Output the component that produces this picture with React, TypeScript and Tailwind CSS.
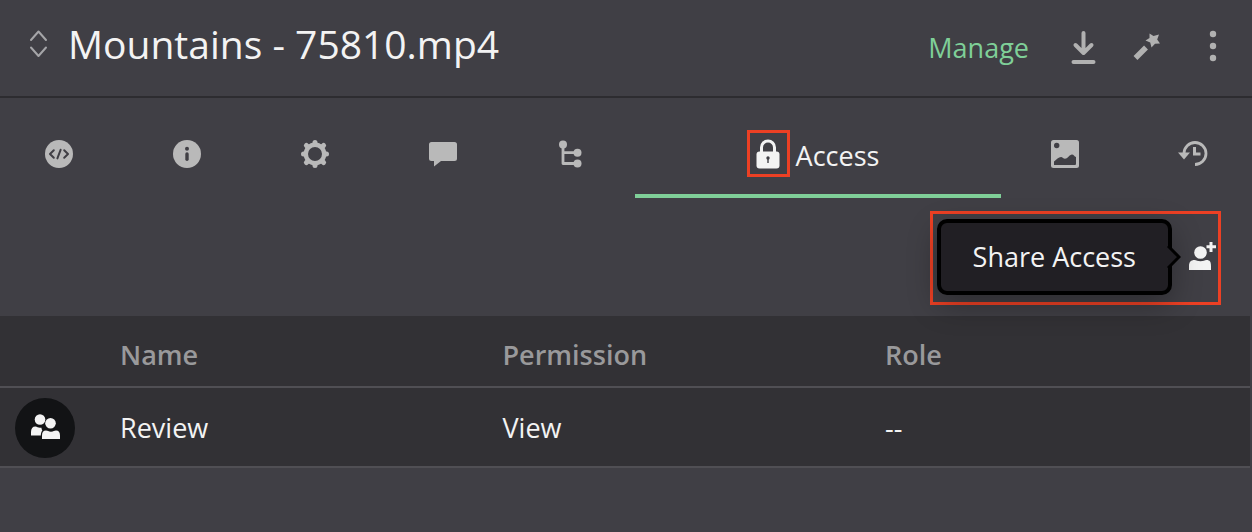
import type { ReactNode } from "react";

type TabItem = {
  id: string;
  label: string;
  icon: ReactNode;
};

const tabs: TabItem[] = [
  {
    id: "metadata",
    label: "Metadata",
    icon: (
      <svg width="28" height="28" viewBox="0 0 28 28" fill="none" aria-hidden="true">
        <circle cx="14" cy="14" r="14" fill="#b9b9b9" />
        <path d="M8.8 10.2 5 14l3.8 3.8M19.2 10.2 23 14l-3.8 3.8M15.6 9.8l-3.2 8.6" stroke="#403f45" strokeWidth="2" strokeLinecap="round" strokeLinejoin="round" />
      </svg>
    ),
  },
  {
    id: "info",
    label: "Info",
    icon: (
      <svg width="28" height="28" viewBox="0 0 28 28" fill="none" aria-hidden="true">
        <circle cx="14" cy="14" r="14" fill="#b9b9b9" />
        <circle cx="14" cy="8.8" r="2" fill="#403f45" />
        <path d="M14 14v5.2" stroke="#403f45" strokeWidth="3.4" strokeLinecap="round" />
      </svg>
    ),
  },
  {
    id: "settings",
    label: "Settings",
    icon: (
      <svg width="28" height="28" viewBox="0 0 28 28" fill="none" stroke="#b9b9b9" aria-hidden="true">
        <circle cx="14" cy="14" r="9.2" strokeWidth="4.4" />
        <path d="M14 2.500v2M14 23.500v2M2.500 14h2M23.500 14h2M5.400 5.400l1.400 1.400M21.200 21.200l1.400 1.400M5.400 22.600l1.400-1.400M21.200 6.800l1.400-1.400" strokeWidth="5" strokeLinecap="round" />
      </svg>
    ),
  },
  {
    id: "comments",
    label: "Comments",
    icon: (
      <svg width="28" height="28" viewBox="0 0 28 28" fill="#b9b9b9" aria-hidden="true">
        <path d="M2.5 2h23A2.5 2.5 0 0 1 28 4.500v14a2.500 2.500 0 0 1-2.500 2.500H12l-7 5.500V21H2.500A2.500 2.500 0 0 1 0 18.500v-14A2.500 2.500 0 0 1 2.500 2Z" />
      </svg>
    ),
  },
  {
    id: "relations",
    label: "Relations",
    icon: (
      <svg width="28" height="28" viewBox="0 0 28 28" fill="#b9b9b9" aria-hidden="true">
        <path d="M6 4v19.500h15M6 12.700h15" fill="none" stroke="#b9b9b9" strokeWidth="2.800" strokeLinejoin="round" />
        <circle cx="6" cy="4.500" r="4" />
        <circle cx="20.500" cy="12.700" r="4" />
        <circle cx="20.500" cy="23.500" r="4" />
      </svg>
    ),
  },
  {
    id: "access",
    label: "Access",
    icon: (
      <svg width="24" height="30" viewBox="0 0 24 30" fill="none" aria-hidden="true">
        <path d="M5.500 14V8.500a6.500 6.500 0 0 1 13 0V14" stroke="#f3f3f3" strokeWidth="3" />
        <rect x="0.500" y="12.500" width="23" height="17" rx="3" fill="#f3f3f3" />
        <circle cx="12" cy="19" r="1.700" fill="#403f45" />
        <path d="M12 19v5" stroke="#403f45" strokeWidth="1.400" />
      </svg>
    ),
  },
  {
    id: "thumbnail",
    label: "Thumbnail",
    icon: (
      <svg width="28" height="28" viewBox="0 0 28 28" fill="#b9b9b9" aria-hidden="true">
        <rect width="28" height="28" rx="2.500" />
        <circle cx="5.700" cy="5.500" r="2.700" fill="#403f45" />
        <path d="M3 25v-3.500c2.500-2 4.500-4.500 7-4.500 1.500 0 2.500 1.800 4 1.800 2.500 0 4.500-4.300 7-4.300 1.700 0 2.300 2 4 2.500v6.500c0 1-.5 1.500-1.500 1.500Z" fill="#403f45" />
      </svg>
    ),
  },
  {
    id: "history",
    label: "History",
    icon: (
      <svg width="30" height="28" viewBox="0 0 30 28" fill="none" aria-hidden="true">
        <path d="M6 13.500a11 11 0 1 1 11 11" stroke="#b9b9b9" strokeWidth="2.800" />
        <path d="M0 12.500h12L6 19.500Z" fill="#b9b9b9" />
        <path d="M16.500 7v7h6" stroke="#b9b9b9" strokeWidth="3" />
      </svg>
    ),
  },
];

const members = [{ name: "Review", permission: "View", role: "--" }];

const columns = [
  { label: "Name", width: "w-[30.6%]" },
  { label: "Permission", width: "w-[30.6%]" },
  { label: "Role", width: "w-auto" },
];

function Header() {
  return (
    <header className="flex h-[98px] items-center border-b-2 border-[#2d2c30] pr-[35px] pl-7">
      <button type="button" aria-label="Switch asset" className="mr-5 -mt-2">
        <svg width="20" height="30" viewBox="0 0 20 30" fill="none" stroke="#a5a5a8" strokeWidth="2" strokeLinecap="round" strokeLinejoin="round" aria-hidden="true">
          <path d="M3 11l7.500-8.500L18 11M3 18.500l7.500 8.500 7.500-8.500" />
        </svg>
      </button>
      <h1 className="min-w-0 flex-1 truncate pb-2 text-[39px] leading-[56px]">
        Mountains - 75810.mp4
      </h1>
      <div className="flex shrink-0 items-center pb-1">
        <a href="#manage" className="pt-1 text-[27px] leading-10 text-[#7fcf98]">
          Manage
        </a>
        <button type="button" aria-label="Download" className="ml-10">
          <svg width="28" height="36" viewBox="0 0 28 36" fill="none" stroke="#b1b1b1" strokeWidth="4" strokeLinecap="round" strokeLinejoin="round" aria-hidden="true">
            <path d="M14.500 5v19M6.500 17l8 8 8-8M4.500 34h20" />
          </svg>
        </button>
        <button type="button" aria-label="Enhance" className="ml-9">
          <svg width="28" height="28" viewBox="0 0 28 28" fill="#b1b1b1" aria-hidden="true">
            <path d="M2.500 26 13 15.500" stroke="#b1b1b1" strokeWidth="5.500" />
            <path d="M16.500 1.500 20.500 4l5.500-1.500-1.800 5L27 11.500l-5 .3L18.500 15.500l-1.300-5L12.500 8.500l4-2.500Z" />
          </svg>
        </button>
        <button type="button" aria-label="More options" className="ml-12">
          <svg width="8" height="32" viewBox="0 0 8 32" fill="#b1b1b1" aria-hidden="true">
            <circle cx="4" cy="4" r="3.200" />
            <circle cx="4" cy="16" r="3.200" />
            <circle cx="4" cy="28" r="3.200" />
          </svg>
        </button>
      </div>
    </header>
  );
}

function Tabs({ active }: { active: string }) {
  return (
    <nav className="-mx-[5px] flex h-[100px]" role="tablist">
      {tabs.map((tab) =>
        tab.id === active ? (
          <button
            key={tab.id}
            type="button"
            role="tab"
            aria-selected="true"
            className="flex w-[29%] items-center justify-center gap-[6px] border-b-4 border-[#7fcf98] pt-[15px] pr-[10px]"
          >
            <span className="flex h-[47px] w-[43px] items-center justify-center border-[3px] border-[#ec4024]">
              {tab.icon}
            </span>
            <span className="pt-1 text-[27px] leading-10">{tab.label}</span>
          </button>
        ) : (
          <button
            key={tab.id}
            type="button"
            role="tab"
            aria-selected="false"
            aria-label={tab.label}
            className="flex flex-1 items-center justify-center border-b-4 border-transparent pt-[15px]"
          >
            {tab.icon}
          </button>
        )
      )}
    </nav>
  );
}

function ShareBar() {
  return (
    <div className="flex justify-end pt-[13px] pr-[31px] pb-[11px]">
      <div className="flex items-center border-[3px] border-[#ec4024] pt-[5px] pr-[2px] pb-[7px] pl-1">
        <div
          role="tooltip"
          id="share-tip"
          className="relative mr-4 rounded-[10px] border-4 border-black bg-[#211f24] px-8 py-[14px] text-[27px] leading-10 shadow-[0_10px_30px_rgba(0,0,0,0.3)]"
        >
          Share Access
          <svg className="absolute top-1/2 -right-[13px] -translate-y-1/2" width="14" height="24" viewBox="0 0 14 24" fill="none" aria-hidden="true">
            <path d="M0 1v22h1L12 12 1 1Z" fill="#211f24" />
            <path d="M1 1l11 11L1 23" stroke="#000" strokeWidth="3" />
          </svg>
        </div>
        <button type="button" aria-label="Share Access" aria-describedby="share-tip">
          <svg width="28" height="30" viewBox="0 0 28 30" fill="#f3f3f3" aria-hidden="true">
            <circle cx="12.500" cy="10.500" r="6.300" />
            <path d="M1 28v-4c0-4 2-6 5.500-6 2 0 3 1.300 6 1.300s4-1.300 6-1.300c3.500 0 4.500 2 4.500 6v4Z" />
            <path d="M23 0v10M18.500 4.700h9.500" stroke="#f3f3f3" strokeWidth="3" />
          </svg>
        </button>
      </div>
    </div>
  );
}

function GroupAvatar() {
  return (
    <span className="flex size-[60px] items-center justify-center rounded-full bg-[#121315]">
      <svg width="30" height="28" viewBox="0 0 30 28" fill="#f3f3f3" aria-hidden="true">
        <circle cx="10" cy="5.500" r="5.300" />
        <circle cx="20.500" cy="9.300" r="5.300" />
        <path d="M1 21.500v-3.500c0-3.500 1.500-5.500 4.500-5.500 1.500 0 2.500 1.300 4.500 1.300h1.500c0 1.200.3 1.900.8 2.700-1 1-1.500 3-1.500 5Z" />
        <path d="M12 25v-3.500c0-3.500 1.300-5 4-5 1.700 0 2.500 1.200 5 1.200s3.300-1.200 5-1.200c2.700 0 4 1.500 4 5V25Z" />
      </svg>
    </span>
  );
}

function AccessTable() {
  return (
    <div className="pr-[2px]">
      <table className="w-full table-fixed border-collapse bg-[#323135] text-left text-[27px] leading-10">
        <thead>
          <tr className="h-[71px] border-b-2 border-[#504f54]">
            <th className="w-[120px]" aria-label="Type" />
            {columns.map((column) => (
              <th key={column.label} scope="col" className={`p-0 pt-2 font-semibold text-[#99999b] ${column.width}`}>
                {column.label}
              </th>
            ))}
          </tr>
        </thead>
        <tbody>
          {members.map((member) => (
            <tr key={member.name} className="h-20 border-b-2 border-[#504f54]">
              <td className="p-0 pt-[2px] pl-[15px]">
                <GroupAvatar />
              </td>
              <td className="p-0 pt-[2px]">{member.name}</td>
              <td className="p-0 pt-[2px]">{member.permission}</td>
              <td className="p-0 pt-[2px]">{member.role}</td>
            </tr>
          ))}
        </tbody>
      </table>
    </div>
  );
}

export default function App() {
  return (
    <main className="min-h-screen overflow-hidden bg-[#403f45] font-['Open_Sans',sans-serif] text-[#f3f3f3]">
      <Header />
      <Tabs active="access" />
      <ShareBar />
      <AccessTable />
    </main>
  );
}
